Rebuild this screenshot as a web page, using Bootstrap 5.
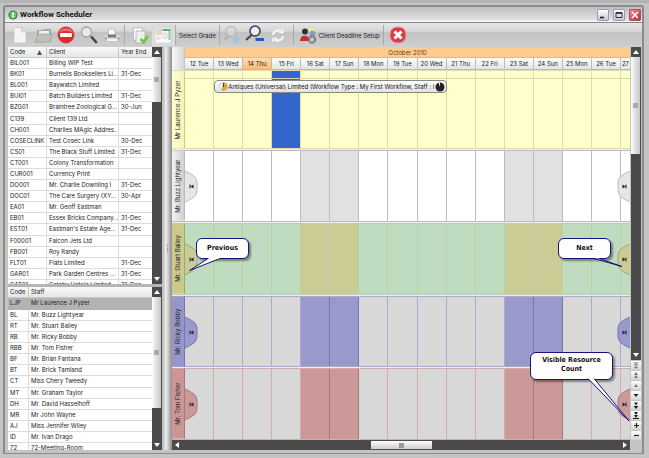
<!DOCTYPE html>
<html lang="en">
<head>
<meta charset="utf-8">
<meta name="viewport" content="width=device-width, initial-scale=1">
<title>Workflow Scheduler</title>
<link href="https://cdn.jsdelivr.net/npm/bootstrap@5.3.0/dist/css/bootstrap.min.css" rel="stylesheet">
<style>
body{font-family:Inter,"Noto Sans",sans-serif;font-size:6px;line-height:11px;color:#222;background:#a9a9a9;overflow:hidden}
button{font:inherit;color:inherit;border:0;background:none;padding:0}
svg{display:block}
.fill{min-height:0}
.frame{padding:2px 5px 4px 3px;background:#c4c4c4;border-top:3px solid #b4b4b4}
.win{border:2px solid #8b8b8b;border-width:2px 2px 1px;background:#bdbdbd;border-radius:3px 3px 0 0}
.titlebar{height:16px;background:linear-gradient(#bdbdbd,#cacaca 30%,#dedede 80%,#fff);padding:0 1px 0 3px;border-bottom:1px solid #85858f}
.titlebar h1{font:bold 8px/14px Roboto,"Open Sans",sans-serif;color:#111;margin-left:2px}
.winbtn{width:12px;height:12px;border:1px solid #9a9ab4;border-radius:1px;background:linear-gradient(#fff,#c4c4d6)}
.winbtn.close-x{background:linear-gradient(135deg,#e89090,#b82e38);border-color:#b05058}
.tools{height:24px;background:linear-gradient(#e6e6e6,#d6d6d6 35%,#c2c2c2 40%,#cecece);padding-left:4px}
.tool{width:23px;height:22px}
.tool.wide{width:auto;margin:0 3px}
.tool.on{background:#dcdcdc}
.vsep{width:1px;height:20px;background:#a9a9a9}
.work{padding:0 1px 3px 3px;background:#c4c4c4}
.side{width:154px;flex:none}
.grid-box{background:#fff;min-height:0}
.upper{flex:238 1 0}
.lower{flex:163 1 0}
.grid-box table{width:100%;table-layout:fixed;border-collapse:separate;border-spacing:0}
.col-code{width:39px}.col-client{width:72px}.col-staff{width:21px}
.grid-box th{font-weight:400;background:linear-gradient(#fafafa,#e6e6e6);border-right:1px solid #c9c9c9;border-bottom:1px solid #c9c9c9;padding:0 0 0 2px;height:11px;line-height:10px;white-space:nowrap}
.grid-box td{border-right:1px solid #dcdcdc;border-bottom:1px solid #dcdcdc;padding:0 0 0 2px;line-height:10px;white-space:nowrap;overflow:hidden}
.grid-box td:last-child,.grid-box th:last-child{border-right:0}
.client-table{height:244px}
.staff-table{height:167px}
.selected-row td{background:#b2b2b2;border-color:#b2b2b2}
.sb{width:10px;background:#4a4a4a;color:#eee;flex:none}
.sb button{height:10px;width:10px;flex:none;display:flex;align-items:center;justify-content:center}
.thumb{margin:0 1px 0 0;background:linear-gradient(90deg,#fff,#e4e4e4 40%,#c8c8c8);display:flex;align-items:center;justify-content:center}
.thumb i{width:5px;height:5px;background:#aaa}
.thumb-a{height:45px}.thumb-b{height:111px}.thumb-c{height:97px}
.splitter-h{height:3px;background:#b4b4b4}
.splitter-v{width:10px;flex:none;background:linear-gradient(90deg,#c4c4c4 20%,#ececec 35%,#d0d0d0 60%,#999 90%);display:flex;align-items:center;justify-content:center}
.chart{min-width:0;background:#fff}
.days{display:grid;grid-template-columns:repeat(15,29fr) 9fr}
.corner{width:13px;flex:none;background:linear-gradient(90deg,#fafafa,#d6d6d6);border-right:1px solid #c4c4c4}
.month{background:#fecb8f;height:11px;color:#5a4023;border-bottom:1px solid #ddb98c}
.day-head{height:12px;background:linear-gradient(#fdfdfd,#e4e4e4);border-right:1px solid #bbb;border-bottom:1px solid #bbb;text-align:center;white-space:nowrap}
.day-head.today{background:linear-gradient(#ffdcb0,#fcbc70)}
.day-head:last-child{border-right:0}
.lanes{gap:1px;background:#eee}
.lane{flex:72 1 0;min-height:0;position:relative;border-top:1px solid var(--line);border-bottom:1px solid var(--line)}
.lane.first{flex-grow:80}
.lane-name{width:13px;flex:none;writing-mode:vertical-rl;transform:rotate(180deg);text-align:center;background:var(--tab);border-left:1px solid var(--edge);white-space:nowrap;line-height:12px}
.cells{min-width:0;position:relative}
.cell{border-right:1px solid var(--line);background:var(--bg);grid-row:1}
.cell.off{background:var(--off)}
.cell:nth-child(16){border-right:0}
.yellow{--bg:#ffffcb;--off:#ffffcb;--line:#e2dbb0;--tab:linear-gradient(90deg,#f4f4b8,#ffffd0);--edge:#ccc690}
.plain{--bg:#fff;--off:#e1e1e1;--line:#bdbdbd;--tab:linear-gradient(90deg,#d0d0d0,#f2f2f2);--edge:#bbb;--knob:#e6e6e6}
.green{--bg:#c0dcc0;--off:#cbcb96;--line:#b9d2a9;--tab:#cbc98c;--edge:#8fae70;--knob:#cbcb96}
.blue{--bg:#d8d8d8;--off:#9999cc;--line:#aaaad2;--tab:#9696ca;--edge:#7777aa;--knob:#9999cc}
.red{--bg:#d8d8d8;--off:#cc9999;--line:#d6abab;--tab:#cc9696;--edge:#a87777;--knob:#cc9999}
.blue .off,.red .off{border-right-color:var(--edge)}
.cell.booked{background:#3366cc}
.allday{height:8px;border-bottom:1px solid #ddd6ac;grid-column:1/-1;grid-row:1;z-index:1}
.event{grid-column:2/span 8;grid-row:1;z-index:2;margin-top:9px;height:13px;border:1px solid #888;border-radius:4px;background:linear-gradient(#fff,#e2e2e2);padding:0 1px 0 4px;color:#111;white-space:nowrap}
.knob{position:absolute;top:50%;margin-top:-16px;z-index:2}
.knob path:first-child{fill:var(--knob);stroke:var(--edge)}
.knob.prev{left:0}.knob.next{right:0}
.hbar{height:10px;background:#4a4a4a;color:#eee}
.hbar button{width:10px;height:10px;display:flex;align-items:center;justify-content:center}
.hthumb{width:61px;height:8px;background:linear-gradient(#fff,#ccc);display:flex;align-items:center;justify-content:center}
.hthumb i{width:5px;height:5px;background:#999}
.rail{width:10px;flex:none;margin-left:1px}
.step{height:9px;flex:none;margin-top:1px;background:linear-gradient(#fff,#d4d4d4);display:flex;align-items:center;justify-content:center}
.rail .last-step{margin-bottom:10px}
.callout{position:absolute;z-index:5;font:bold 7px/9px "DejaVu Sans Condensed","Open Sans",sans-serif;color:#111;text-align:center}
.callout div{position:relative;background:#fff;border:1px solid #14147c;border-radius:6px;box-shadow:2px 2px 2px #0006}
.callout svg{position:absolute;z-index:1}
.c-prev{left:24px;top:14px;width:53px}
.c-next{right:19px;top:14px;width:53px}
.c-prev div,.c-next div{padding:5px 0}
.c-count{right:17px;top:-17px;width:83px}
.c-count div{padding:3px 0 5px}
.t-prev{left:-8px;top:20px}.t-next{left:33px;top:20px}.t-count{left:57px;top:26px}
</style>
</head>
<body>
<div class="frame vh-100 d-flex flex-column">
<main class="win fill flex-grow-1 d-flex flex-column">
<header class="titlebar d-flex align-items-center">
<svg width="10" height="10" viewBox="0 0 10 10"><circle cx="5" cy="5" r="4.6" fill="#2f8a3a"/><circle cx="5" cy="5" r="3.4" fill="#6cc06c"/><path d="M4 2.400h2v3.200H4z" fill="#fff"/><path d="M4 6h2v1.400H4z" fill="#e6f7e6"/></svg>
<h1 class="mb-0 flex-grow-1">Workflow Scheduler</h1>
<div class="d-flex gap-1">
<button class="winbtn" aria-label="Minimize"><svg width="10" height="10"><path d="M2 7.500h4" stroke="#222" stroke-width="1.600"/></svg></button>
<button class="winbtn" aria-label="Maximize"><svg width="10" height="10"><path d="M2 2.500h6v5H2z M2 3.400h6" fill="none" stroke="#333"/></svg></button>
<button class="winbtn close-x" aria-label="Close"><svg width="10" height="10"><path d="M2 2l6 6M8 2L2 8" stroke="#fff" stroke-width="1.500"/></svg></button>
</div>
</header>
<nav class="tools d-flex align-items-center" aria-label="Tools">
<button class="tool" aria-label="New"><svg width="22" height="22" viewBox="0 0 22 22"><path d="M5 3.500h7.500L17 8v11H5z" fill="#f4f4f4" stroke="#c4c4c4" stroke-width=".7"/><path d="M12.500 3.500V8H17" fill="#ddd" stroke="#c4c4c4" stroke-width=".7"/></svg></button>
<button class="tool" aria-label="Open"><svg width="22" height="22" viewBox="0 0 22 22"><path d="M5 18V6h6l1-1h7v13z" fill="#a9aaa4"/><path d="M7 7h10v8H7z" fill="#f2f2f2"/><path d="M3 18L6 10h14l-2 8z" fill="#c0c1bb" stroke="#92938c" stroke-width=".6"/></svg></button>
<button class="tool" aria-label="Block"><svg width="22" height="22" viewBox="0 0 22 22"><circle cx="11" cy="11" r="8.200" fill="#dc2a2a" stroke="#c05050" stroke-width=".6"/><path d="M4 8.500a8 8 0 0 1 14 0c-4-2-10-2-14 0z" fill="#f17070"/><rect x="5" y="9" width="12" height="4" rx="1" fill="#fff"/></svg></button>
<button class="tool" aria-label="Find"><svg width="22" height="22" viewBox="0 0 22 22"><circle cx="8.500" cy="8" r="5" fill="#e9e9ec" stroke="#a6a6a6" stroke-width="1.300"/><path d="M12 11.500l2 2" stroke="#888" stroke-width="1.600"/><path d="M14 13.500l4 4.500" stroke="#444" stroke-width="2.600" stroke-linecap="round"/></svg></button>
<button class="tool" aria-label="Print"><svg width="22" height="22" viewBox="0 0 22 22"><path d="M7.500 12V5h6l1 7z" fill="#fafafa" stroke="#aaa" stroke-width=".6"/><path d="M3.500 11.500h15.500v5H3.500z" fill="#b4b4b4"/><path d="M3.500 11.500h15.500v1.500H3.500z" fill="#e2e2e2"/><path d="M7 10.500h8v2.500H7z" fill="#777"/><path d="M6 14.500h10.500v2.500H6z" fill="#f4f4f4"/></svg></button>
<span class="vsep me-1"></span>
<button class="tool" aria-label="Validate"><svg width="22" height="22" viewBox="0 0 22 22"><path d="M4.500 4h9v12h-9z" fill="#fff" stroke="#aaa" stroke-width=".7"/><path d="M7 7h9v12H7z" fill="#efefef" stroke="#a4a4a4" stroke-width=".7"/><path d="M11.500 15l3 3 4.500-6" fill="none" stroke="#72c832" stroke-width="2.800"/></svg></button>
<button class="tool on" aria-label="Layout"><svg width="22" height="22" viewBox="0 0 22 22"><path d="M3 4h16v15H3z" fill="#fafafa" stroke="#ccc" stroke-width=".6"/><path d="M4 5h6v6H4z" fill="#e4d8b8"/><path d="M10.500 5H18.500v2h-8z" fill="#5fae80"/><path d="M16.500 7h2v9h-2z" fill="#8cc6a2"/><path d="M11 9h4v5h-4z" fill="#f0f0f0" stroke="#bbb" stroke-width=".5"/><path d="M4.500 13h4m-4 2h4" stroke="#ccc"/></svg></button>
<span class="vsep"></span>
<button class="tool wide">Select Grade</button>
<span class="vsep"></span>
<button class="tool" aria-label="Zoom in"><svg width="22" height="22" viewBox="0 0 22 22" opacity=".6"><circle cx="11" cy="7.500" r="5" fill="#ddd" stroke="#aaa" stroke-width="1.300"/><path d="M8 12l-3.500 4" stroke="#aaa" stroke-width="2"/><path d="M16.500 12v8M12.500 16h8" stroke="#94bedc" stroke-width="2.600"/></svg></button>
<button class="tool" aria-label="Zoom out"><svg width="22" height="22" viewBox="0 0 22 22"><circle cx="12" cy="7" r="5" fill="#e8eef8" stroke="#343b55" stroke-width="1.500"/><path d="M8.500 11L3 16" stroke="#5f4632" stroke-width="2.200"/><path d="M12.500 15.500h8.500" stroke="#2458c0" stroke-width="3"/></svg></button>
<button class="tool" aria-label="Refresh"><svg width="22" height="22" viewBox="0 0 22 22" fill="none" stroke="#f7f7f7" stroke-width="2.200"><path d="M7 11a5 5 0 0 1 8-3.500M17 12a5 5 0 0 1-8 3.500"/><path d="M13 8.500h4V5M11 14.500H7V18" stroke-width="1.500"/></svg></button>
<span class="vsep ms-1"></span>
<button class="tool wide d-flex align-items-center"><svg width="22" height="22" viewBox="0 0 22 22"><circle cx="15" cy="5" r="3" fill="#f0e0a0"/><circle cx="8" cy="7.500" r="3" fill="#333"/><path d="M3 17c0-7 9-7 10 0z" fill="#cc2d2d"/><circle cx="15.500" cy="9.500" r="2.800" fill="#7ba0bc"/><circle cx="15" cy="15.500" r="3.200" fill="none" stroke="#6c7888" stroke-width="2.200" stroke-dasharray="2 .6"/></svg>Client Deadline Setup</button>
<span class="vsep"></span>
<button class="tool ms-1" aria-label="Exit"><svg width="22" height="22" viewBox="0 0 22 22"><rect x="2" y="3" width="16" height="16" rx="7" fill="#d83d4a" stroke="#e8a0a0"/><path d="M6.500 7.500l7 7M13.500 7.500l-7 7" stroke="#fff" stroke-width="3"/></svg></button>
</nav>
<div class="work fill flex-grow-1 d-flex">
<aside class="side d-flex flex-column">
<section class="grid-box upper d-flex">
<div class="flex-grow-1 overflow-hidden"><table class="client-table"><colgroup><col class="col-code"><col class="col-client"><col></colgroup><thead><tr><th><span class="d-flex justify-content-between align-items-center pe-1">Code <svg width="5" height="5"><path d="M2.500 0L5 5H0z" fill="#555"/></svg></span></th><th>Client</th><th>Year End</th></tr></thead><tbody id="clients"></tbody></table></div>
<div class="sb d-flex flex-column"><button aria-label="Up"><svg width="6" height="4"><path d="M3 0l3 4H0z" fill="#fff"/></svg></button><div class="thumb thumb-a"><i></i></div><span class="flex-grow-1"></span><button aria-label="Down"><svg width="6" height="4"><path d="M3 4l3-4H0z" fill="#fff"/></svg></button></div>
</section>
<div class="splitter-h"></div>
<section class="grid-box lower d-flex">
<div class="flex-grow-1 overflow-hidden"><table class="staff-table"><colgroup><col class="col-staff"><col></colgroup><thead><tr><th>Code</th><th>Staff</th></tr></thead><tbody id="staff"></tbody></table></div>
<div class="sb d-flex flex-column"><button aria-label="Up"><svg width="6" height="4"><path d="M3 0l3 4H0z" fill="#fff"/></svg></button><div class="thumb thumb-b"><i></i></div><span class="flex-grow-1"></span><button aria-label="Down"><svg width="6" height="4"><path d="M3 4l3-4H0z" fill="#fff"/></svg></button></div>
</section>
</aside>
<div class="splitter-v"><svg width="3" height="10"><path d="M1.500 0v10" stroke="#888" stroke-dasharray="1 1"/></svg></div>
<section class="chart flex-grow-1 d-flex flex-column">
<div class="d-flex"><div class="corner"></div><div class="flex-grow-1"><div class="month text-center">October 2010</div><div class="days" id="heads"></div></div></div>
<div class="lanes fill flex-grow-1 d-flex flex-column" id="lanes"></div>
<div class="hbar d-flex align-items-center"><button aria-label="Left"><svg width="4" height="6"><path d="M0 3l4-3v6z" fill="#fff"/></svg></button><span class="flex-grow-1"></span><div class="hthumb"><i></i></div><span class="flex-grow-1"></span><button aria-label="Right"><svg width="4" height="6"><path d="M4 3L0 0v6z" fill="#fff"/></svg></button></div>
</section>
<div class="rail d-flex flex-column">
<div class="sb d-flex flex-column flex-grow-1"><button aria-label="Up"><svg width="6" height="4"><path d="M3 0l3 4H0z" fill="#fff"/></svg></button><div class="thumb thumb-c"><i></i></div><span class="flex-grow-1"></span><button aria-label="Down"><svg width="6" height="4"><path d="M3 4l3-4H0z" fill="#fff"/></svg></button></div>
<button class="step" aria-label="First"><svg width="6" height="7"><path d="M0 .5h6M3 1l2 2H1zM3 4l2 2H1z" stroke="#888" stroke-width=".6" fill="#888"/></svg></button>
<button class="step" aria-label="Page up"><svg width="6" height="7"><path d="M3 0l2 3H1zM3 3l2 3H1z" fill="#777"/></svg></button>
<button class="step" aria-label="Previous row"><svg width="6" height="7"><path d="M3 2l2 3H1z" fill="#777"/></svg></button>
<button class="step" aria-label="Next row"><svg width="6" height="7"><path d="M3 5l2.500-3h-5z" fill="#222"/></svg></button>
<button class="step" aria-label="Page down"><svg width="6" height="7"><path d="M3 3.500L5 .5H1zM3 7l2.500-3h-5z" fill="#222"/></svg></button>
<button class="step" aria-label="Last"><svg width="6" height="7"><path d="M3 3L5 0H1zM3 6l2-3H1zM0 6h6v1H0z" fill="#222"/></svg></button>
<button class="step" aria-label="More rows"><svg width="7" height="7"><path d="M3.500 1v5M1 3.500h5" stroke="#222" stroke-width="1.200"/></svg></button>
<button class="step last-step" aria-label="Fewer rows"><svg width="7" height="7"><path d="M1 3.500h5" stroke="#222" stroke-width="1.200"/></svg></button>
</div>
</div>
</main>
</div>
<script>
const clients = [["BIL001","Billing WIP Test",""],["BK01","Burnells Booksellers Li...","31-Dec"],["BL001","Baywatch Limited",""],["BUI01","Batch Builders Limited","31-Dec"],["BZG01","Braintree Zoological G...","30-Jun"],["C139","Client 139 Ltd",""],["CH001","Charlies MAgic Addres...",""],["COSECLINK","Test Cosec Link","30-Dec"],["CS01","The Black Stuff Limited","31-Dec"],["CT001","Colony Transformation",""],["CUR001","Currency Print",""],["DO001","Mr. Charlie Downling I","31-Dec"],["DOC01","The Care Surgery (XY...","30-Apr"],["EA01","Mr. Geoff Eastman",""],["EB01","Essex Bricks Company...","31-Dec"],["EST01","Eastman's Estate Age...","31-Dec"],["F00001","Falcon Jets Ltd",""],["FB001","Roy Randy",""],["FLT01","Flats Limited","31-Dec"],["GAR01","Park Garden Centres ...","31-Dec"],["GAT01","Gatsby Hotels Limited","31-Dec"]];
const staff = [["LJP","Mr Laurence J Pyzer"],["BL","Mr. Buzz Lightyear"],["RT","Mr. Stuart Bailey"],["RB","Mr. Ricky Bobby"],["RBB","Mr. Tom Fisher"],["BF","Mr. Brian Fantana"],["BT","Mr. Brick Tamland"],["CT","Miss Chery Tweedy"],["MT","Mr. Graham Taylor"],["DH","Mr. David Hasselhoff"],["MR","Mr John Wayne"],["AJ","Miss Jennifer Wiley"],["ID","Mr. Ivan Drago"],["72","72-Meeting-Room"]];
const rows = (data, sel) => data.map((r, i) => `<tr class="${i === sel ? "selected-row" : ""}">${r.map(c => `<td>${c}</td>`).join("")}</tr>`).join("");
document.getElementById("clients").innerHTML = rows(clients, -1);
document.getElementById("staff").innerHTML = rows(staff, 0);

const names = ["Tue","Wed","Thu","Fri","Sat","Sun","Mon"];
const days = Array.from({length: 16}, (_, i) => ({n: 12 + i, d: names[i % 7]}));
document.getElementById("heads").innerHTML = days.map(x => `<div class="day-head ${x.n === 14 ? "today" : ""}">${x.n}${x.n === 27 ? "" : " " + x.d}</div>`).join("");

const event = `<div class="allday"></div><div class="event d-flex align-items-center justify-content-between"><svg class="flex-shrink-0" width="9" height="9" viewBox="0 0 9 9"><circle cx="4.500" cy="4.500" r="4" fill="#fff" stroke="#aaa" stroke-width=".6"/><path d="M4.500 .5a4 4 0 1 1-2 7.500z" fill="#dda62a"/><path d="M4.500 1v4" stroke="#333" stroke-width=".9"/></svg><span class="flex-shrink-0">Antiques (Universal) Limited (Workflow Type : My First Workflow, Staff : l</span><svg class="flex-shrink-0" width="10" height="10" viewBox="0 0 10 10"><circle cx="5" cy="5" r="4.500" fill="#222"/><path d="M5 .5a4.500 4.500 0 0 0-1.500 .3L5 5z" fill="#fff"/></svg></div>`;
const knobs = `<svg class="knob prev" width="13" height="33"><path d="M-1 .5L6 4q6 3 6 8v9q0 5-6 8l-7 3.500z"/><path d="M4.500 14.500h1v4h-1zM8.500 14.500v4l-3-2z" fill="#222"/></svg><svg class="knob next" width="13" height="33"><path d="M14 .5L7 4q-6 3-6 8v9q0 5 6 8l7 3.500z"/><path d="M5.500 14.500v4l3-2zM8.500 14.500h1v4h-1z" fill="#222"/></svg>`;
const tips = {
  green: `<div class="callout c-prev"><div>Previous</div><svg class="t-prev" width="40" height="15"><path d="M20 .5L1.500 12.500 32 .5" fill="#fff" stroke="#14147c"/><path d="M21 0h10" stroke="#fff" stroke-width="2"/></svg></div><div class="callout c-next"><div>Next</div><svg class="t-next" width="34" height="11"><path d="M3 .5L31 8.500 8 .5" fill="#fff" stroke="#14147c"/></svg></div>`,
  red: `<div class="callout c-count"><div>Visible Resource Count</div><svg class="t-count" width="43" height="45"><path d="M1 .5L42 43 7 .5" fill="#fff" stroke="#14147c"/><path d="M1.500 0h5" stroke="#fff" stroke-width="2"/></svg></div>`
};
const lanes = [["yellow first","Mr Laurence J Pyzer"],["plain","Mr. Buzz Lightyear"],["green","Mr. Stuart Bailey"],["blue","Mr. Ricky Bobby"],["red","Mr. Tom Fisher"]];
document.getElementById("lanes").innerHTML = lanes.map(([cls, name], i) => {
  const cells = days.map((x, k) => `<div class="cell ${x.d[0] === "S" ? "off" : ""} ${i === 0 && x.n === 15 ? "booked" : ""}" style="grid-column:${k + 1}"></div>`).join("");
  return `<div class="lane d-flex ${cls}"><div class="lane-name">${name}</div><div class="cells days flex-grow-1">${cells}${i ? knobs : event}</div>${tips[cls] || ""}</div>`;
}).join("");
</script>
<script src="https://cdn.jsdelivr.net/npm/bootstrap@5.3.0/dist/js/bootstrap.bundle.min.js"></script>
</body>
</html>
